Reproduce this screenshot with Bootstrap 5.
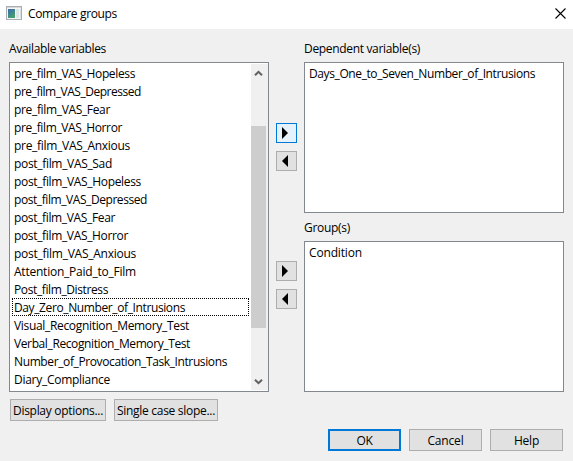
<!DOCTYPE html>
<html lang="en">
<head>
<meta charset="utf-8">
<meta name="viewport" content="width=device-width, initial-scale=1">
<title>Compare groups</title>
<link href="https://cdn.jsdelivr.net/npm/bootstrap@5.3.0/dist/css/bootstrap.min.css" rel="stylesheet">
<style>
  body { font: 12px/18px "Segoe UI", "Open Sans", "Noto Sans", sans-serif; color: #000; background: #f0f0f0; overflow: hidden; }
  .dialog-window { width: 573px; height: 461px; }
  .title-bar { height: 29px; padding: 0 7px 3px 6px; }
  .title-bar .caption { margin-left: 6px; padding-top: 2px; }
  .title-bar .close-mark { margin-top: 1px; }
  .dialog-main { padding: 10px 9px 0; }
  .left-pane, .right-pane { width: 260px; }
  .field-label { height: 23px; line-height: 20px; }
  .group-label { margin-top: 5px; }
  .list-box { background: #fff; border: 1px solid #828790; padding: 1px 0 1px 2px; }
  .list-tall { height: 330px; }
  .list-short { height: 151px; }
  .list-box .list-group-item { height: 18px; line-height: 18px; padding: 1px 0 0 2px; border: 0; background: none; color: #000; white-space: nowrap; }
  .list-box .focused { outline: 1px dotted #000; outline-offset: -1px; }
  .list-tall .list-group { margin-right: 2px; }
  .scroll-track { width: 17px; background: #f0f0f0; }
  .scroll-thumb { height: 202px; margin-top: 45px; width: 15px; background: #cdcdcd; }
  .transfer { width: 21px; margin-left: 7px; margin-right: 7px; padding-top: 84px; }
  .dlg-btn { --bs-btn-font-size: 12px; --bs-btn-line-height: 18px; --bs-btn-padding-x: 0; --bs-btn-padding-y: 0; --bs-btn-border-radius: 0; --bs-btn-color: #000; --bs-btn-bg: #e1e1e1; --bs-btn-border-color: #adadad; --bs-btn-hover-color: #000; --bs-btn-hover-bg: #e5f1fb; --bs-btn-hover-border-color: #0078d7; white-space: nowrap; height: 22px; display: flex; align-items: center; justify-content: center; }
  .dlg-btn .fit { padding-top: 2px; }
  .arrow-btn { width: 21px; height: 20px; }
  .arrow-btn svg { margin-right: 3px; margin-bottom: 1px; }
  .arrow-btn.hot { --bs-btn-bg: #e5f1fb; --bs-btn-border-color: #0078d7; }
  .pair-gap { margin-top: 90px; }
  .option-row { margin: 7px 0 0 1px; }
  .wide-a { width: 96px; } .wide-b { width: 104px; }
  .action-row { margin-top: 8px; padding-right: 10px; }
  .action-btn { width: 73px; }
  .default-btn { --bs-btn-border-width: 2px; --bs-btn-border-color: #0078d7; }
  .fit { display: inline-block; white-space: nowrap; }
</style>
<script src="https://cdn.jsdelivr.net/npm/bootstrap@5.3.0/dist/js/bootstrap.bundle.min.js"></script>
</head>
<body>
<div class="dialog-window d-flex flex-column">
  <header class="title-bar bg-white d-flex align-items-center">
    <svg width="16" height="14" viewBox="0 0 16 14" shape-rendering="crispEdges">
      <defs><linearGradient id="pane" x1="0" y1="0" x2="0.5" y2="1"><stop offset="0" stop-color="#3c68ad"/><stop offset="1" stop-color="#46a070"/></linearGradient></defs>
      <rect x=".5" y=".5" width="15" height="13" fill="#f4f5f5" stroke="#a9adb1"/>
      <rect x="1" y="1" width="14" height="1" fill="#d5d8da"/>
      <rect x="2" y="3" width="7" height="9" fill="url(#pane)"/>
      <rect x="10" y="3" width="3" height="9" fill="#dce5e5"/>
      <rect x="14" y="3" width="1" height="9" fill="#d6dcdf"/>
    </svg>
    <span class="caption"><span class="fit" data-w="89">Compare groups</span></span>
    <svg class="ms-auto close-mark" width="11" height="11" viewBox="0 0 11 11"><path d="M.5.5l10 10M10.5.5l-10 10" stroke="#000" stroke-width="1.1"/></svg>
  </header>

  <main class="dialog-main d-flex">
    <section class="left-pane">
      <div class="field-label"><span class="fit" data-w="97">Available variables</span></div>
      <div class="list-box list-tall d-flex">
        <ul class="list-group list-group-flush rounded-0 flex-grow-1">
          <li class="list-group-item"><span class="fit" data-w="121">pre_film_VAS_Hopeless</span></li>
          <li class="list-group-item"><span class="fit" data-w="127">pre_film_VAS_Depressed</span></li>
          <li class="list-group-item"><span class="fit" data-w="96">pre_film_VAS_Fear</span></li>
          <li class="list-group-item"><span class="fit" data-w="108">pre_film_VAS_Horror</span></li>
          <li class="list-group-item"><span class="fit" data-w="116">pre_film_VAS_Anxious</span></li>
          <li class="list-group-item"><span class="fit" data-w="98">post_film_VAS_Sad</span></li>
          <li class="list-group-item"><span class="fit" data-w="127">post_film_VAS_Hopeless</span></li>
          <li class="list-group-item"><span class="fit" data-w="133">post_film_VAS_Depressed</span></li>
          <li class="list-group-item"><span class="fit" data-w="101">post_film_VAS_Fear</span></li>
          <li class="list-group-item"><span class="fit" data-w="114">post_film_VAS_Horror</span></li>
          <li class="list-group-item"><span class="fit" data-w="122">post_film_VAS_Anxious</span></li>
          <li class="list-group-item"><span class="fit" data-w="122">Attention_Paid_to_Film</span></li>
          <li class="list-group-item"><span class="fit" data-w="94">Post_film_Distress</span></li>
          <li class="list-group-item focused"><span class="fit" data-w="171">Day_Zero_Number_of_Intrusions</span></li>
          <li class="list-group-item"><span class="fit" data-w="175">Visual_Recognition_Memory_Test</span></li>
          <li class="list-group-item"><span class="fit" data-w="176">Verbal_Recognition_Memory_Test</span></li>
          <li class="list-group-item"><span class="fit" data-w="213">Number_of_Provocation_Task_Intrusions</span></li>
          <li class="list-group-item"><span class="fit" data-w="96">Diary_Compliance</span></li>
        </ul>
        <div class="scroll-track d-flex flex-column align-items-start">
          <svg width="15" height="17" viewBox="0 0 15 17"><path d="M4 11.3l3.5-3.5 3.5 3.5" fill="none" stroke="#606060" stroke-width="2"/></svg>
          <div class="scroll-thumb"></div>
          <svg class="mt-auto" width="15" height="17" viewBox="0 0 15 17"><path d="M4 6.7l3.5 3.5L11 6.7" fill="none" stroke="#606060" stroke-width="2"/></svg>
        </div>
      </div>
      <div class="d-flex gap-2 option-row">
        <button type="button" class="btn dlg-btn wide-a"><span class="fit" data-w="90">Display options...</span></button>
        <button type="button" class="btn dlg-btn wide-b"><span class="fit" data-w="98">Single case slope...</span></button>
      </div>
    </section>

    <section class="transfer d-flex flex-column">
      <button type="button" class="btn dlg-btn arrow-btn hot" aria-label="Add dependent variable"><svg width="6" height="12" viewBox="0 0 6 12"><path d="M0 0l6 6-6 6z"/></svg></button>
      <button type="button" class="btn dlg-btn arrow-btn mt-2" aria-label="Remove dependent variable"><svg width="6" height="12" viewBox="0 0 6 12"><path d="M6 0L0 6l6 6z"/></svg></button>
      <button type="button" class="btn dlg-btn arrow-btn pair-gap" aria-label="Add group"><svg width="6" height="12" viewBox="0 0 6 12"><path d="M0 0l6 6-6 6z"/></svg></button>
      <button type="button" class="btn dlg-btn arrow-btn mt-2" aria-label="Remove group"><svg width="6" height="12" viewBox="0 0 6 12"><path d="M6 0L0 6l6 6z"/></svg></button>
    </section>

    <section class="right-pane">
      <div class="field-label"><span class="fit" data-w="116">Dependent variable(s)</span></div>
      <div class="list-box list-short">
        <ul class="list-group list-group-flush rounded-0"><li class="list-group-item"><span class="fit" data-w="226">Days_One_to_Seven_Number_of_Intrusions</span></li></ul>
      </div>
      <div class="field-label group-label"><span class="fit" data-w="46">Group(s)</span></div>
      <div class="list-box list-short">
        <ul class="list-group list-group-flush rounded-0"><li class="list-group-item"><span class="fit" data-w="53">Condition</span></li></ul>
      </div>
    </section>
  </main>

  <footer class="d-flex justify-content-end gap-2 action-row">
    <button type="button" class="btn dlg-btn action-btn default-btn"><span class="fit" data-w="16">OK</span></button>
    <button type="button" class="btn dlg-btn action-btn"><span class="fit" data-w="36">Cancel</span></button>
    <button type="button" class="btn dlg-btn action-btn"><span class="fit" data-w="25">Help</span></button>
  </footer>
</div>
<script>
  // Space each label's letters so that it takes its nominal dialog width.
  document.querySelectorAll('.fit').forEach(function (el) {
    var extra = Number(el.dataset.w) - el.getBoundingClientRect().width;
    el.style.letterSpacing = (extra / el.textContent.length) + 'px';
  });
</script>
</body>
</html>
